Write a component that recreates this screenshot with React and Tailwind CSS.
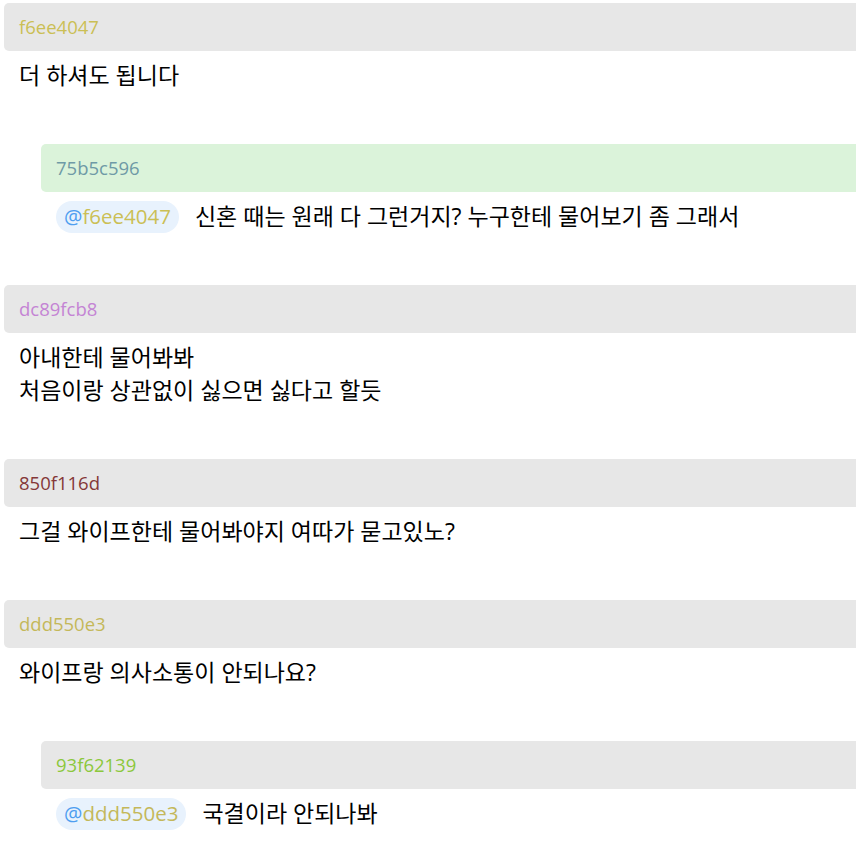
import React from "react";

const font = { fontFamily: '"Open Sans", "Noto Sans CJK KR", sans-serif' };

function Header({ id, color, green }) {
  return (
    <div
      className={`h-[48px] flex items-center pl-[15px] rounded-l-[5px] ${green ? "bg-[#dbf3da]" : "bg-[#e7e7e7]"}`}
    >
      <span className={`text-[18.5px] ${color}`}>{id}</span>
    </div>
  );
}

function Mention({ id, color }) {
  return (
    <span className="inline-flex items-center h-[32px] px-[8px] rounded-full bg-[#e8f2fd] text-[20.5px] mr-[16px]">
      <span className="text-[#4f9ef0]">@</span>
      <span className={color}>{id}</span>
    </span>
  );
}

export default function App() {
  return (
    <div className="w-full overflow-hidden bg-white text-black" style={font}>
      <div className="w-[900px] pl-[4px] pt-[3px]">
        {/* comment 1 */}
        <div>
          <Header id="f6ee4047" color="text-[#cbbf55]" />
          <div className="px-[15px] pt-[8px] text-[23px] leading-[33px]">더 하셔도 됩니다</div>
          <div className="ml-[37px] mt-[52px]">
            <Header id="75b5c596" color="text-[#6f9aa6]" green />
            <div className="px-[15px] pt-[8px] text-[23px] leading-[33px] flex items-center">
              <Mention id="f6ee4047" color="text-[#cbbf55]" />
              <span>신혼 때는 원래 다 그런거지? 누구한테 물어보기 좀 그래서</span>
            </div>
          </div>
        </div>
        {/* comment 2 */}
        <div className="mt-[52px]">
          <Header id="dc89fcb8" color="text-[#c484d4]" />
          <div className="px-[15px] pt-[8px] text-[23px] leading-[33px]">
            <div>아내한테 물어봐봐</div>
            <div>처음이랑 상관없이 싫으면 싫다고 할듯</div>
          </div>
        </div>
        {/* comment 3 */}
        <div className="mt-[52px]">
          <Header id="850f116d" color="text-[#853838]" />
          <div className="px-[15px] pt-[8px] text-[23px] leading-[33px]">그걸 와이프한테 물어봐야지 여따가 묻고있노?</div>
        </div>
        {/* comment 4 */}
        <div className="mt-[52px]">
          <Header id="ddd550e3" color="text-[#c4b85a]" />
          <div className="px-[15px] pt-[8px] text-[23px] leading-[33px]">와이프랑 의사소통이 안되나요?</div>
          <div className="ml-[37px] mt-[52px]">
            <Header id="93f62139" color="text-[#8cc83c]" />
            <div className="px-[15px] pt-[8px] text-[23px] leading-[33px] flex items-center">
              <Mention id="ddd550e3" color="text-[#c4b85a]" />
              <span>국결이라 안되나봐</span>
            </div>
          </div>
        </div>
      </div>
    </div>
  );
}
